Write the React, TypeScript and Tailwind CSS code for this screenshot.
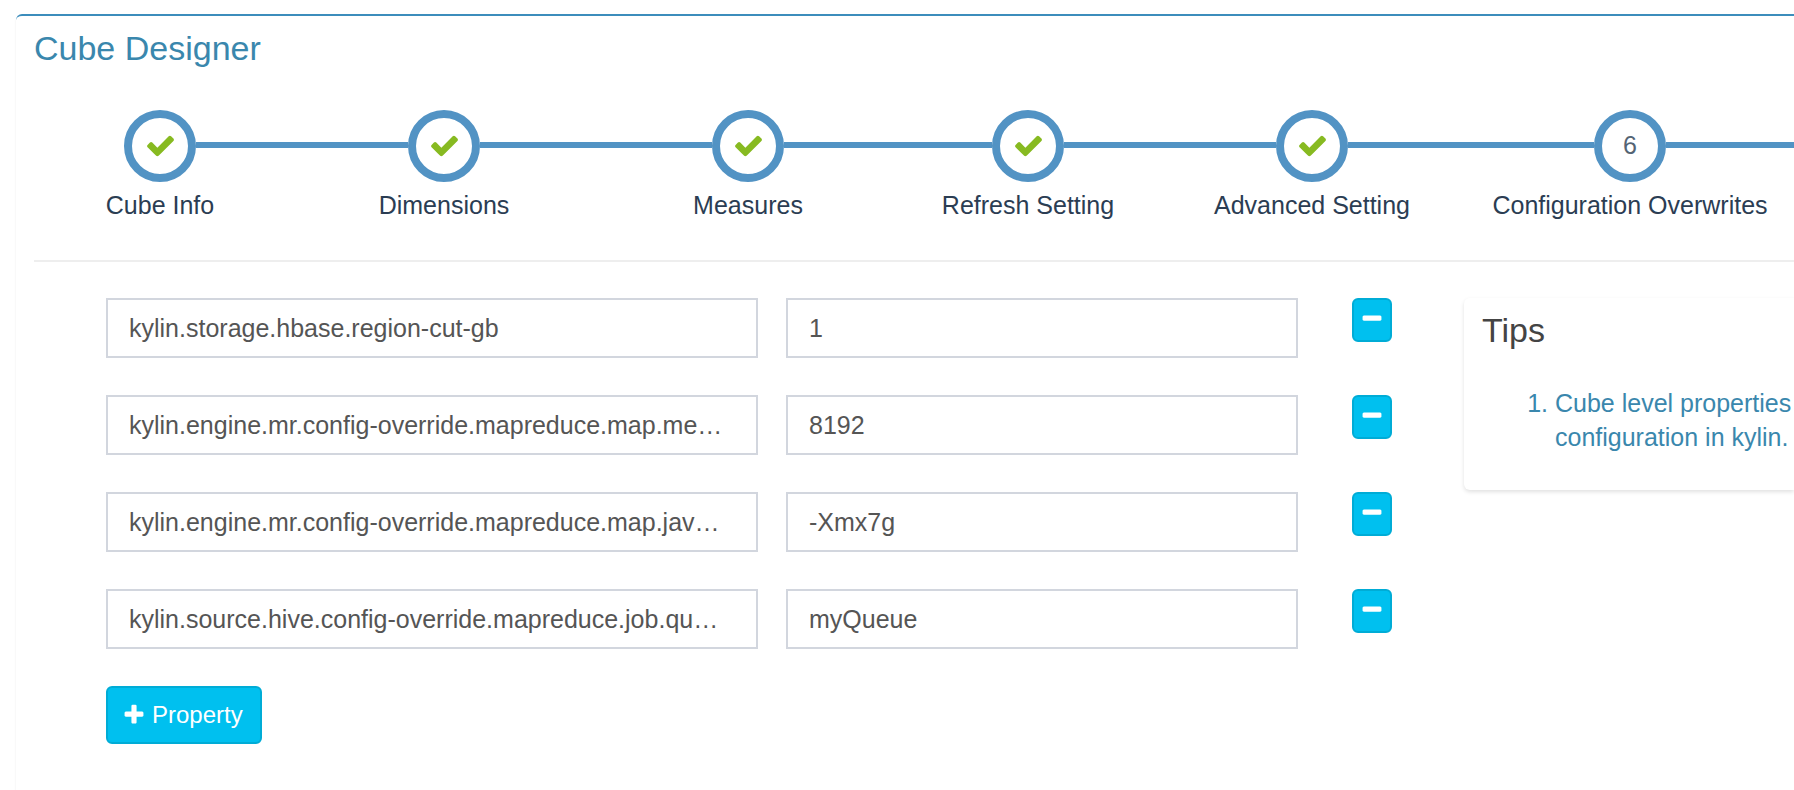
import React, { useState } from "react";

type Property = { id: number; name: string; value: string };

const steps = [
  "Cube Info",
  "Dimensions",
  "Measures",
  "Refresh Setting",
  "Advanced Setting",
  "Configuration Overwrites",
];

const currentStep = 5;

const initialProperties: Property[] = [
  { id: 1, name: "kylin.storage.hbase.region-cut-gb", value: "1" },
  { id: 2, name: "kylin.engine.mr.config-override.mapreduce.map.memory.mb", value: "8192" },
  { id: 3, name: "kylin.engine.mr.config-override.mapreduce.map.java.opts", value: "-Xmx7g" },
  { id: 4, name: "kylin.source.hive.config-override.mapreduce.job.queuename", value: "myQueue" },
];

const glyphs = {
  check:
    "M1671 566q0 40-28 68l-724 724-136 136q-28 28-68 28t-68-28l-136-136-362-362q-28-28-28-68t28-68l136-136q28-28 68-28t68 28l294 295 656-657q28-28 68-28t68 28l136 136q28 28 28 68z",
  plus: "M1600 736v192q0 40-28 68t-68 28h-416v416q0 40-28 68t-68 28h-192q-40 0-68-28t-28-68v-416h-416q-40 0-68-28t-28-68v-192q0-40 28-68t68-28h416v-416q0-40 28-68t68-28h192q40 0 68 28t28 68v416h416q40 0 68 28t28 68z",
  minus: "M1600 736v192q0 40-28 68t-68 28h-1216q-40 0-68-28t-28-68v-192q0-40 28-68t68-28h1216q40 0 68 28t28 68z",
};

function Icon({ name, className }: { name: keyof typeof glyphs; className: string }) {
  return (
    <svg viewBox="0 0 1792 1792" className={className} fill="currentColor" aria-hidden="true">
      <path d={glyphs[name]} />
    </svg>
  );
}

function Step({ label, index }: { label: string; index: number }) {
  return (
    <li className="flex flex-col items-center">
      <div className="flex w-full items-center">
        <span className={`mb-0.5 h-1.5 flex-1 ${index === 0 ? "" : "bg-[#5293c4]"}`} />
        <span className="flex size-[72px] items-center justify-center rounded-full border-8 border-[#5293c4] bg-white pb-0.5 text-[25px] leading-none text-[#546474]">
          {index < currentStep ? <Icon name="check" className="size-[31px] text-[#87ba21]" /> : index + 1}
        </span>
        <span className="mb-0.5 h-1.5 flex-1 bg-[#5293c4]" />
      </div>
      <span className="mt-[7px] whitespace-nowrap text-[25px] leading-8 text-[#2b3d53]">{label}</span>
    </li>
  );
}

const fieldClass =
  "h-[60px] w-full min-w-0 text-ellipsis border-2 border-[#d2d6de] bg-white pl-[21px] pr-[31px] text-[25px] text-[#555] outline-none focus:border-[#3c8dbc]";

export default function App() {
  const [properties, setProperties] = useState(initialProperties);

  const update = (id: number, patch: Partial<Property>) =>
    setProperties((list) => list.map((p) => (p.id === id ? { ...p, ...patch } : p)));
  const remove = (id: number) => setProperties((list) => list.filter((p) => p.id !== id));
  const add = () => setProperties((list) => [...list, { id: Date.now(), name: "", value: "" }]);

  return (
    <div className="flex min-h-screen flex-col overflow-hidden bg-white pl-4 pt-3.5 font-['Helvetica_Neue','Liberation_Sans',Arial,sans-serif]">
      <main className="flex-1 rounded-tl-md border-t-2 border-[#3c8dbc] bg-white shadow-[0_2px_2px_rgba(0,0,0,0.1)]">
        <h1 className="pl-[18px] pt-3 text-[34px] leading-10 text-[#3a87ad]">Cube Designer</h1>

        <ol className="mt-[42px] grid grid-cols-[260fr_308fr_300fr_260fr_308fr_328fr] pl-3.5">
          {steps.map((label, i) => (
            <Step key={label} label={label} index={i} />
          ))}
        </ol>

        <hr className="ml-[18px] mt-[39px] border-t-2 border-[#eee]" />

        <div className="mt-9 flex items-start gap-[72px] pl-[90px]">
          <form className="min-w-0 flex-1" onSubmit={(e) => e.preventDefault()}>
            <div className="flex flex-col gap-[37px]">
              {properties.map((p) => (
                <div key={p.id} className="flex items-start gap-[54px]">
                  <div className="grid min-w-0 flex-1 grid-cols-[652fr_512fr] gap-7">
                    <input
                      aria-label="Property name"
                      className={fieldClass}
                      value={p.name}
                      onChange={(e) => update(p.id, { name: e.target.value })}
                    />
                    <input
                      aria-label="Property value"
                      className={fieldClass}
                      value={p.value}
                      onChange={(e) => update(p.id, { value: e.target.value })}
                    />
                  </div>
                  <button
                    type="button"
                    aria-label="Remove property"
                    onClick={() => remove(p.id)}
                    className="flex h-11 w-10 items-center justify-center rounded-md border-2 border-[#00acd6] bg-[#00c0ef] pb-0.5 text-white"
                  >
                    <Icon name="minus" className="size-6 shrink-0" />
                  </button>
                </div>
              ))}
            </div>
            <button
              type="button"
              onClick={add}
              className="mt-[37px] flex h-[58px] items-center gap-1.5 rounded-md border-2 border-[#00acd6] bg-[#00c0ef] pl-3.5 pr-[17px] text-2xl text-white"
            >
              <Icon name="plus" className="size-6" />
              Property
            </button>
          </form>

          <aside className="w-[330px] shrink-0 rounded-l-md bg-white pb-9 pl-[18px] pt-3 shadow-[0_2px_4px_rgba(0,0,0,0.12)]">
            <h2 className="text-[34px] leading-10 text-[#444]">Tips</h2>
            <ol className="mt-9 list-decimal pl-[73px] text-[25px] leading-[34px] text-[#3a87ad]">
              <li>Cube level properties configuration in kylin.</li>
            </ol>
          </aside>
        </div>
      </main>
    </div>
  );
}
